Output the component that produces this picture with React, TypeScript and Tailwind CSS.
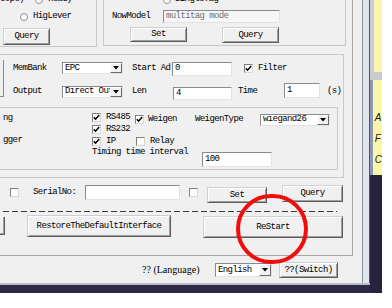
import React from "react";

type P = { className?: string; children?: React.ReactNode };

function Btn({ className = "", children }: P) {
  return (
    <div
      className={`flex shrink-0 items-center justify-center bg-[#f0f0f0] border border-t-[#d0d0d0] border-l-[#d0d0d0] border-r-[#5c5c5c] border-b-[#5c5c5c] shadow-[inset_1px_1px_0_#fff,inset_-1px_-1px_0_#a0a0a0] ${className}`}
    >
      {children}
    </div>
  );
}

function Input({ className = "", children }: P) {
  return (
    <div
      className={`flex shrink-0 items-center pl-[2px] bg-white border border-t-[#8a8a8a] border-l-[#8a8a8a] border-r-[#e3e3e3] border-b-[#e3e3e3] ${className}`}
    >
      {children}
    </div>
  );
}

function Select({ className = "", children }: P) {
  return (
    <div
      className={`flex shrink-0 items-stretch bg-white border border-t-[#8a8a8a] border-l-[#8a8a8a] border-r-[#e3e3e3] border-b-[#e3e3e3] ${className}`}
    >
      <div className="flex flex-1 items-center pl-[2px] overflow-hidden whitespace-nowrap">{children}</div>
      <div className="w-[12px] flex items-center justify-center bg-[#f0f0f0] border border-t-[#fff] border-l-[#fff] border-r-[#6a6a6a] border-b-[#6a6a6a]">
        <svg width="6" height="4" viewBox="0 0 6 4">
          <path d="M0 0H6L3 3.5Z" fill="#000" />
        </svg>
      </div>
    </div>
  );
}

function Check({ on = false, className = "" }: { on?: boolean; className?: string }) {
  return (
    <div
      className={`w-[9px] h-[9px] shrink-0 bg-white border border-t-[#808080] border-l-[#808080] border-r-[#d8d8d8] border-b-[#d8d8d8] flex items-center justify-center ${className}`}
    >
      {on && (
        <svg width="7" height="7" viewBox="0 0 7 7">
          <path d="M0.8 3.2L2.6 5.2L6.2 1" stroke="#000" strokeWidth="1.5" fill="none" />
        </svg>
      )}
    </div>
  );
}

function Radio({ className = "" }: { className?: string }) {
  return (
    <div
      className={`w-[8px] h-[8px] shrink-0 rounded-full bg-white border border-[#8f8f8f] ${className}`}
    />
  );
}

function Panel() {
  return (
    <div className="w-[353px] h-[256px] shrink-0 border-r border-b border-[#a8a8a8] flex flex-col">
      {/* top groups, their tops are cut off */}
      <div className="flex h-[47px] shrink-0">
        <div className="w-[97px] h-[47px] border-r border-b border-[#c9c9c9] flex flex-col">
          <div className="-mt-[5px] h-[9px] flex items-center">
            <span className="w-[34px]">cope)--</span>
            <Radio className="ml-[1px]" />
            <span className="ml-[5px]">Ready</span>
          </div>
          <div className="mt-[8px] h-[9px] flex items-center">
            <Radio className="ml-[20px]" />
            <span className="ml-[5px]">HigLever</span>
          </div>
          <Btn className="mt-[7px] ml-[3px] w-[47px] h-[17px]">Query</Btn>
        </div>
        <div className="ml-[6px] w-[243px] h-[46px] border-l border-r border-b border-[#c9c9c9] flex flex-col">
          <div className="-mt-[5px] h-[9px] flex items-center">
            <Radio className="ml-[59px]" />
            <span className="ml-[4px]">SingleTag</span>
          </div>
          <div className="mt-[6px] h-[13px] flex items-center">
            <span className="ml-[8px] w-[51px]">NowModel</span>
            <Input className="w-[117px] h-[13px] !bg-[#f6f6f6] text-[#707070]">multitag mode</Input>
          </div>
          <div className="mt-[4px] flex items-start">
            <Btn className="ml-[26px] w-[57px] h-[15px]">Set</Btn>
            <Btn className="ml-[35px] w-[57px] h-[16px]">Query</Btn>
          </div>
        </div>
      </div>

      {/* main group */}
      <div className="mt-[7px] w-[344px] h-[124px] shrink-0 border-t border-r border-b border-[#c9c9c9] flex flex-col">
        <div className="mt-[6px] flex">
          <div className="w-[4px] h-[37px] -mt-[1px] border-r border-b border-[#8a8a8a]" />
          <div className="flex flex-col">
            <div className="h-[15px] flex items-center">
              <span className="ml-[9px] w-[49px]">MemBank</span>
              <Select className="w-[61px] h-[12px] self-start mt-[1px]">EPC</Select>
              <span className="ml-[9px] w-[40px]">Start Ad</span>
              <Input className="w-[60px] h-[14px]">0</Input>
              <Check on className="ml-[12px]" />
              <span className="ml-[5px]">Filter</span>
            </div>
            <div className="mt-[7px] h-[17px] flex items-center">
              <span className="ml-[9px] w-[49px]">Output</span>
              <Select className="w-[61px] h-[12px]">Direct Out</Select>
              <span className="ml-[9px] w-[41px]">Len</span>
              <Input className="w-[59px] h-[13px] self-end">4</Input>
              <span className="ml-[6px] w-[46px]">Time</span>
              <Input className="w-[36px] h-[15px] self-start">1</Input>
              <span className="ml-[7px]">(s)</span>
            </div>
          </div>
        </div>

        <div className="mt-[7px] w-[338px] h-[63px] shrink-0 border-t border-r border-b border-[#c9c9c9] flex flex-col">
          <div className="h-[40px] flex">
            <div className="w-[92px] pl-[3px] pt-[3px] flex flex-col">
              <div className="h-[14px] flex items-center">ng</div>
              <div className="mt-[8px] h-[14px] flex items-center">gger</div>
            </div>
            <div className="w-[43px] pt-[3px] flex flex-col">
              {["RS485", "RS232", "IP"].map((t) => (
                <div key={t} className="h-[14px] flex items-center">
                  <Check on />
                  <span className="ml-[5px]">{t}</span>
                </div>
              ))}
            </div>
            <div className="w-[60px] pt-[3px] flex flex-col">
              <div className="h-[17px] flex items-center">
                <Check on />
                <span className="ml-[4px]">Weigen</span>
              </div>
              <div className="mt-[6px] h-[14px] flex items-center">
                <Check className="ml-[1px]" />
                <span className="ml-[5px]">Relay</span>
              </div>
            </div>
            <div className="pt-[3px]">
              <div className="h-[17px] flex items-center">
                <span className="w-[65px]">WeigenType</span>
                <Select className="w-[70px] h-[12px]">wiegand26</Select>
              </div>
            </div>
          </div>
          <div className="flex items-start">
            <span className="ml-[92px] w-[110px] h-[9px] flex items-center">Timing time interval</span>
            <Input className="mt-[4px] w-[70px] h-[15px]">100</Input>
          </div>
        </div>
      </div>

      {/* serial row */}
      <div className="mt-[7px] h-[18px] flex items-start shrink-0">
        <Check className="ml-[10px] mt-[3px]" />
        <span className="ml-[14px] mt-[3px] w-[52px] h-[9px] flex items-center">SerialNo:</span>
        <Input className="w-[95px] h-[15px]" />
        <Check className="ml-[9px] mt-[3px]" />
        <Btn className="ml-[9px] mt-[2px] w-[60px] h-[16px]">Set</Btn>
        <Btn className="ml-[15px] w-[61px] h-[17px]">Query</Btn>
      </div>

      <div className="mt-[8px] ml-[3px] w-[334px] h-px shrink-0 bg-[repeating-linear-gradient(90deg,#3a3a3a_0_6px,transparent_6px_9px)]" />

      <div className="mt-[3px] flex items-start shrink-0">
        <div className="mt-[2px] w-[5px] h-[18px] border-r border-b border-[#5c5c5c] shadow-[inset_-1px_-1px_0_#a0a0a0]" />
        <Btn className="ml-[22px] w-[144px] h-[22px]">RestoreTheDefaultInterface</Btn>
        <Btn className="ml-[32px] mt-[1px] w-[140px] h-[22px]">ReStart</Btn>
      </div>
    </div>
  );
}

export default function App() {
  return (
    <div className="relative w-[392px] h-[308px] bg-white overflow-hidden font-['Liberation_Mono',monospace] text-[9px] leading-none tracking-[-0.6px] text-black">
      <div className="flex h-[293px]">
        <div className="w-[370px] flex flex-col">
          <div className="flex h-[283px]">
            <div className="w-[362px] h-[283px] bg-[#f0f0f0] flex flex-col overflow-hidden">
              <Panel />
              <div className="mt-[6px] h-[16px] flex items-center shrink-0">
                <span className="ml-[142px] w-[73px] font-['Liberation_Serif',serif] text-[10px] tracking-normal">
                  ?? (Language)
                </span>
                <Select className="w-[57px] h-[14px]">English</Select>
                <Btn className="ml-[7px] w-[59px] h-[16px]">??(Switch)</Btn>
              </div>
            </div>
            <div className="w-[8px] flex">
              <div className="w-px bg-[#8d929a]" />
              <div className="w-[6px] bg-[#e2e6ec]" />
              <div className="w-px bg-[#4e5360]" />
            </div>
          </div>
          <div className="h-[10px] flex flex-col">
            <div className="h-[2px] bg-[#b9bec6]" />
            <div className="flex-1 bg-[#2d2848]" />
          </div>
        </div>
        <div className="w-[12px] flex flex-col">
          <div className="h-[72px] flex">
            <div className="w-[4px] bg-[#c9ced8]" />
            <div className="flex-1 bg-[#fbf5b4]" />
          </div>
          <div className="h-[8px] bg-[#c9cbce]" />
          <div className="h-[95px] flex">
            <div className="w-[3px] bg-[#8c98b4]" />
            <div className="flex-1 bg-[#fbf6a8] pt-[33px] flex flex-col gap-[13px] pl-[2px] font-['Liberation_Sans',sans-serif] text-[10px] tracking-normal italic text-[#222]">
              <span className="h-[8px]">A</span>
              <span className="h-[8px]">F</span>
              <span className="h-[8px]">C</span>
            </div>
          </div>
          <div className="flex-1 bg-[#27223d]" />
        </div>
      </div>
      <div className="absolute left-[236px] top-[194px] w-[72px] h-[70px] rounded-full border-4 border-[#f20d0d]" />
    </div>
  );
}
